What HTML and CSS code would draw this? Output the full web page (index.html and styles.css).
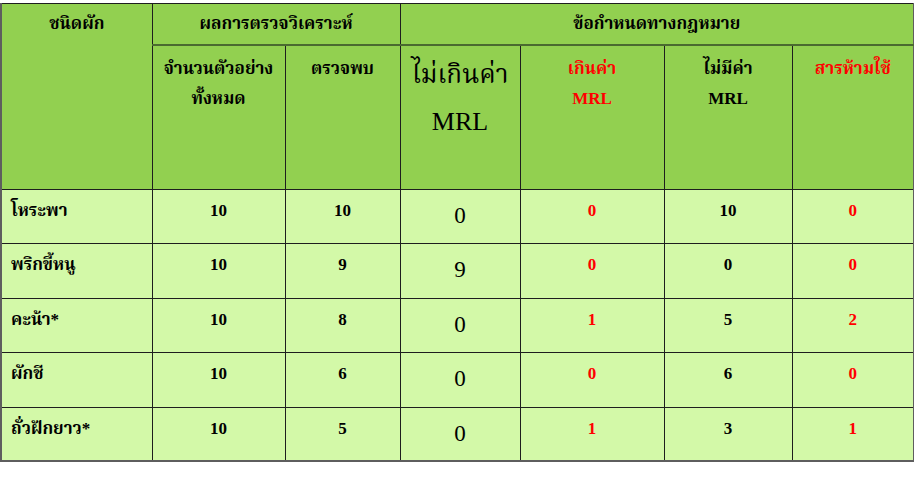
FILE: index.html
```html
<!DOCTYPE html>
<html lang="th">
<head>
<meta charset="utf-8">
<link rel="stylesheet" href="styles.css">
</head>
<body>
<table class="grid">
  <colgroup>
    <col class="c1"><col class="c2"><col class="c3"><col class="c4"><col class="c5"><col class="c6"><col class="c7">
  </colgroup>
  <thead>
    <tr class="h1">
      <th rowspan="2" class="veg-h">ชนิดผัก</th>
      <th colspan="2">ผลการตรวจวิเคราะห์</th>
      <th colspan="4">ข้อกำหนดทางกฎหมาย</th>
    </tr>
    <tr class="h2">
      <th>จำนวนตัวอย่าง<br>ทั้งหมด</th>
      <th>ตรวจพบ</th>
      <th class="big">ไม่เกินค่า<br><span class="mrl-big">MRL</span></th>
      <th class="red">เกินค่า<br><span class="mrl">MRL</span></th>
      <th>ไม่มีค่า<br><span class="mrl">MRL</span></th>
      <th class="red">สารห้ามใช้</th>
    </tr>
  </thead>
  <tbody>
    <tr class="r-a"><td class="name">โหระพา</td><td>10</td><td>10</td><td class="bignum">0</td><td class="red">0</td><td>10</td><td class="red">0</td></tr>
    <tr class="r-b"><td class="name">พริกขี้หนู</td><td>10</td><td>9</td><td class="bignum">9</td><td class="red">0</td><td>0</td><td class="red">0</td></tr>
    <tr class="r-a"><td class="name">คะน้า*</td><td>10</td><td>8</td><td class="bignum">0</td><td class="red">1</td><td>5</td><td class="red">2</td></tr>
    <tr class="r-b"><td class="name">ผักชี</td><td>10</td><td>6</td><td class="bignum">0</td><td class="red">0</td><td>6</td><td class="red">0</td></tr>
    <tr class="r-c"><td class="name">ถั่วฝักยาว*</td><td>10</td><td>5</td><td class="bignum">0</td><td class="red">1</td><td>3</td><td class="red">1</td></tr>
  </tbody>
</table>
</body>
</html>
```
FILE: styles.css
```css
html, body {
  margin: 0;
  padding: 0;
  background: #ffffff;
}
body {
  padding-top: 3px;
  font-family: "Liberation Serif", "Times New Roman", "Norasi", "Kinnari", "Noto Serif Thai", serif;
  color: #000;
}
.grid {
  border-collapse: collapse;
  table-layout: fixed;
  width: 913px;
  border-left: 2px solid #5e5e5e;
  border-right: 2px solid #5e5e5e;
  border-bottom: 2px solid #5e5e5e;
  border-top: 1px solid #111;
}
.c1 { width: 151px; }
.c2 { width: 133px; }
.c3 { width: 115px; }
.c4 { width: 120px; }
.c5 { width: 144px; }
.c6 { width: 128px; }
.c7 { width: 122px; }
th, td {
  border: 1px solid #1e1e1e;
  vertical-align: top;
  text-align: center;
  padding: 0;
  font-weight: bold;
  font-size: 17px;
}
th {
  background: #92d050;
  line-height: 30px;
}
.h1 th {
  height: 41px;
  padding-top: 6px;
  box-sizing: border-box;
  line-height: 28px;
}
.h1 th + th {
  border-bottom: 2px solid #4a6a30;
}
.h2 th {
  height: 145px;
  padding-top: 8px;
  box-sizing: border-box;
}
.h2 th.big {
  font-weight: normal;
  font-size: 26px;
  line-height: 47px;
  padding-top: 5px;
}
.mrl-big { font-size: 26px; }
.mrl { font-size: 17px; }
.red { color: #ff0000; }
td {
  background: #d3f9a8;
  box-sizing: border-box;
  padding-top: 10px;
  line-height: 22px;
}
.r-a td { height: 54px; }
.r-b td { height: 55px; }
.r-c td { height: 53px; }
td.name {
  text-align: left;
  padding-left: 9px;
}
td.bignum {
  font-weight: normal;
  font-size: 23px;
  padding-top: 15px;
}
```
